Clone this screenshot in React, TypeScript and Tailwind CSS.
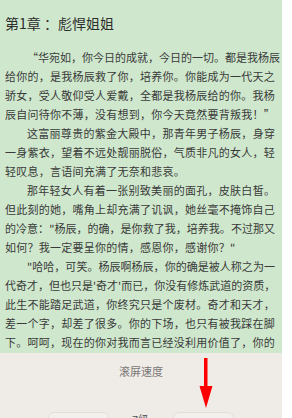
// 阅读页：章节正文 + 底部滚屏速度面板

type Line = { text: string; indent?: boolean; last?: boolean };

const LINES: Line[] = [
  { text: "“华宛如，你今日的成就，今日的一切。都是我杨辰", indent: true },
  { text: "给你的，是我杨辰救了你，培养你。你能成为一代天之" },
  { text: "骄女，受人敬仰受人爱戴，全都是我杨辰给的你。我杨" },
  { text: "辰自问待你不薄，没有想到，你今天竟然要背叛我！”", last: true },
  { text: "这富丽尊贵的紫金大殿中，那青年男子杨辰，身穿", indent: true },
  { text: "一身紫衣，望着不远处靓丽脱俗，气质非凡的女人，轻" },
  { text: "轻叹息，言语间充满了无奈和悲哀。", last: true },
  { text: "那年轻女人有着一张别致美丽的面孔，皮肤白皙。", indent: true },
  { text: "但此刻的她，嘴角上却充满了讥讽，她丝毫不掩饰自己" },
  { text: "的冷意：\"杨辰，的确，是你救了我，培养我。不过那又" },
  { text: "如何？我一定要呈你的情，感恩你，感谢你？\"", last: true },
  { text: "\"哈哈，可笑。杨辰啊杨辰，你的确是被人称之为一", indent: true },
  { text: "代奇才，但也只是'奇才'而已，你没有修炼武道的资质，" },
  { text: "此生不能踏足武道，你终究只是个废材。奇才和天才，" },
  { text: "差一个字，却差了很多。你的下场，也只有被我踩在脚" },
  { text: "下。呵呵，现在的你对我而言已经没利用价值了，你的" },
];

function TextLine({ line }: { line: Line }) {
  const pad = line.indent ? "pl-[22px]" : "";

  if (line.last) {
    return (
      <p className={`whitespace-nowrap tracking-[0.25px] ${pad}`}>{line.text}</p>
    );
  }

  // 行末まで均等に並べる
  return (
    <p className={`flex justify-between whitespace-nowrap ${pad}`}>
      {Array.from(line.text).map((ch, i) => (
        <span key={i}>{ch}</span>
      ))}
    </p>
  );
}

export default function App() {
  return (
    <div className="relative flex h-[418px] w-[292px] overflow-hidden bg-white font-['Noto_Sans_CJK_SC','Noto_Sans',sans-serif]">
      <div className="flex w-[282px] flex-col">
        <section className="h-[353px] shrink-0 overflow-hidden bg-[#cfe8cd] pl-[5px] pt-[13px]">
          <h1 className="h-[20px] text-[14px] leading-[20px] text-[#2e2e2e]">
            第1章 ：彪悍姐姐
          </h1>

          <div className="mt-[15px] w-[270px] text-[11px] leading-[19px] text-[#3a3a3a]">
            {LINES.map((line, i) => (
              <TextLine key={i} line={line} />
            ))}
          </div>
        </section>

        <section className="flex h-[65px] shrink-0 flex-col items-center overflow-hidden bg-[#efece8] pt-[10px]">
          <p className="h-[16px] text-[11px] leading-[16px] text-[#7a7775]">滚屏速度</p>

          <div className="mt-[33px] flex items-start justify-center gap-[23px]">
            <div className="h-[30px] w-[61px] rounded-md border border-[#e2dfdb] bg-[#f2f0ed]" />
            <span className="w-[18px] text-[11px] leading-[14px] text-[#555]">7级</span>
            <div className="h-[30px] w-[61px] rounded-md border border-[#e2dfdb] bg-[#f2f0ed]" />
          </div>
        </section>
      </div>

      <div className="w-[10px] bg-white" />

      {/* 红色标注箭头 */}
      <svg
        className="absolute left-[198px] top-[357px]"
        width="17"
        height="53"
        viewBox="0 0 17 53"
      >
        <rect x="6" y="1" width="3.5" height="31" fill="#ff0000" />
        <polygon points="1.5,29 14.5,29 8,51" fill="#ff0000" />
      </svg>
    </div>
  );
}
